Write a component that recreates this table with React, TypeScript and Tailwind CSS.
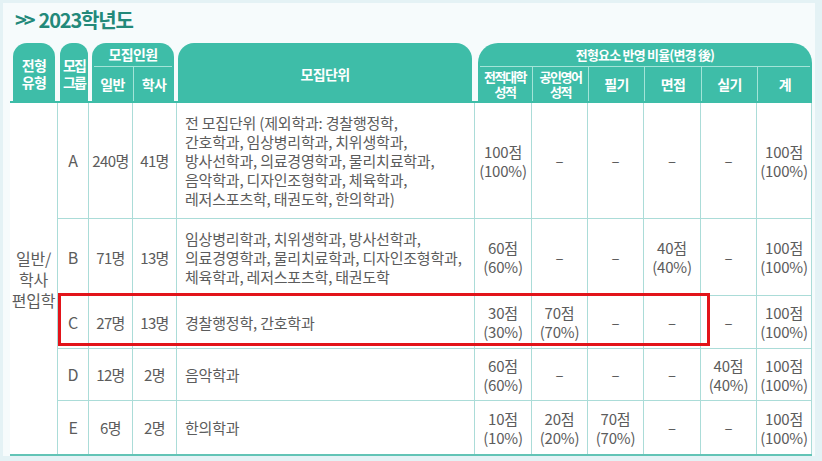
import React from "react";

const TEAL = "bg-[#3ebda8]";
const COLS = "grid grid-cols-[48px_31px_44px_44px_298px_57px_56px_56px_57px_56px_55px]";

interface Row {
  group: string;
  general: string;
  bachelor: string;
  units: string[];
  scores: string[];
}

const ROWS: Row[] = [
  {
    group: "A",
    general: "240명",
    bachelor: "41명",
    units: [
      "전 모집단위 (제외학과: 경찰행정학,",
      "간호학과, 임상병리학과, 치위생학과,",
      "방사선학과, 의료경영학과, 물리치료학과,",
      "음악학과, 디자인조형학과, 체육학과,",
      "레저스포츠학, 태권도학, 한의학과)",
    ],
    scores: ["100점\n(100%)", "–", "–", "–", "–", "100점\n(100%)"],
  },
  {
    group: "B",
    general: "71명",
    bachelor: "13명",
    units: [
      "임상병리학과, 치위생학과, 방사선학과,",
      "의료경영학과, 물리치료학과, 디자인조형학과,",
      "체육학과, 레저스포츠학, 태권도학",
    ],
    scores: ["60점\n(60%)", "–", "–", "40점\n(40%)", "–", "100점\n(100%)"],
  },
  {
    group: "C",
    general: "27명",
    bachelor: "13명",
    units: ["경찰행정학, 간호학과"],
    scores: ["30점\n(30%)", "70점\n(70%)", "–", "–", "–", "100점\n(100%)"],
  },
  {
    group: "D",
    general: "12명",
    bachelor: "2명",
    units: ["음악학과"],
    scores: ["60점\n(60%)", "–", "–", "–", "40점\n(40%)", "100점\n(100%)"],
  },
  {
    group: "E",
    general: "6명",
    bachelor: "2명",
    units: ["한의학과"],
    scores: ["10점\n(10%)", "20점\n(20%)", "70점\n(70%)", "–", "–", "100점\n(100%)"],
  },
];

const SUB_HEADS = ["전적대학\n성적", "공인영어\n성적", "필기", "면접", "실기", "계"];

export default function App() {
  return (
    <div
      className="w-[822px] h-[461px] bg-[#e4f2f5] p-[3px] pr-[7px] overflow-hidden"
      style={{ fontFamily: '"Noto Sans CJK KR", "Noto Sans", sans-serif' }}
    >
      <div className="h-[453px] bg-[#f6fbfc] pl-[7px] pr-[3px]">
        {/* Title */}
        <div className="h-[40px] pl-[5px] pt-[3px] text-[20px] font-bold leading-[28px] text-[#23897a] tracking-[-1.2px]">
          <span className="tracking-[-3px] mr-[6px]">&gt;&gt;</span>2023학년도
        </div>

        <div className="relative">
          {/* Header */}
          <div className={`${COLS} grid-rows-[23px_35px] h-[58px] text-white font-bold text-[14px] leading-[17px] tracking-[-0.6px]`}>
            <div className={`row-span-2 mx-[3px] rounded-t-[14px] ${TEAL} flex items-center justify-center text-center whitespace-pre-line pt-[4px]`}>
              {"전형\n유형"}
            </div>
            <div className={`row-span-2 ml-[2px] mr-[1px] rounded-t-[12px] ${TEAL} flex items-center justify-center text-center whitespace-pre-line pt-[4px] tracking-[-2px]`}>
              {"모집\n그룹"}
            </div>
            <div className={`col-span-2 row-span-2 mx-[3px] rounded-t-[14px] ${TEAL} flex flex-col`}>
              <div className="h-[23px] flex items-end justify-center pb-[3px]">모집인원</div>
              <div className="mx-[2px] h-px bg-[#a3e4d8]" />
              <div className="flex-1 grid grid-cols-2">
                <div className="flex items-center justify-center">일반</div>
                <div className="flex items-center justify-center border-l border-[#a3e4d8]">학사</div>
              </div>
            </div>
            <div className={`row-span-2 ml-[1px] mr-[3px] rounded-t-[16px] ${TEAL} flex items-center justify-center pt-[4px]`}>
              모집단위
            </div>
            <div className={`col-span-6 row-span-2 ml-[3px] rounded-t-[20px] ${TEAL} flex flex-col text-[13px]`}>
              <div className="h-[23px] flex items-end justify-center pb-[3px] tracking-[-0.8px] whitespace-pre">전형요소 반영 비율(변경 後)</div>
              <div className="mx-[2px] h-px bg-[#a3e4d8]" />
              <div className="flex-1 grid grid-cols-[54px_56px_56px_57px_56px_55px]">
                {SUB_HEADS.map((h, i) => (
                  <div
                    key={h}
                    className={`flex items-center justify-center text-center whitespace-pre-line leading-[15px] ${i > 0 ? "border-l border-[#a3e4d8]" : ""} ${i < 2 ? "tracking-[-1.5px]" : "text-[14px]"}`}
                  >
                    {h}
                  </div>
                ))}
              </div>
            </div>
          </div>

          {/* Body */}
          <div
            className={`${COLS} grid-rows-[116px_77px_53px_52px_53px] bg-white border-t-2 border-b-2 border-t-[#3ebda8] border-b-[#62c4b6] text-[15px] leading-[19px] text-[#5c5c5c] tracking-[-0.2px]`}
          >
            <div className="row-span-5 border-r border-[#abdcd8] flex items-center justify-center text-center whitespace-pre-line leading-[21px] pt-[2px] text-[16px]">
              {"일반/\n학사\n편입학"}
            </div>
            {ROWS.map((r, ri) => {
              const rowBorder = ri < ROWS.length - 1 ? "border-b" : "";
              const cell = `${rowBorder} border-r border-[#abdcd8] flex items-center justify-center text-center`;
              return (
                <React.Fragment key={r.group}>
                  <div className={`${cell} text-[16px]`}>{r.group}</div>
                  <div className={`${cell} tracking-[-0.6px]`}>{r.general}</div>
                  <div className={`${cell} tracking-[-0.6px]`}>{r.bachelor}</div>
                  <div className={`${rowBorder} border-r border-[#abdcd8] flex flex-col justify-center pl-[8px]`}>
                    {r.units.map((u) => (
                      <div key={u} className="whitespace-nowrap">{u}</div>
                    ))}
                  </div>
                  {r.scores.map((s, si) => (
                    <div key={si} className={`${cell} whitespace-pre-line`}>
                      {s}
                    </div>
                  ))}
                </React.Fragment>
              );
            })}
          </div>

          {/* Highlight for group C */}
          <div className="absolute left-[48px] top-[250px] w-[652px] h-[53px] border-[3px] border-[#e2141a] pointer-events-none" />
        </div>
      </div>
    </div>
  );
}
